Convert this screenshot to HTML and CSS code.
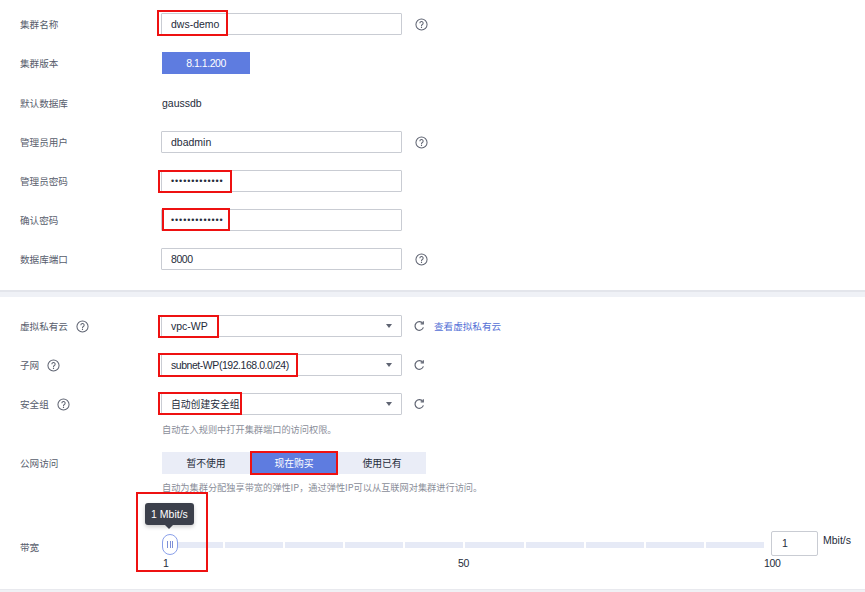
FILE: index.html
```html
<!DOCTYPE html>
<html lang="zh">
<head>
<meta charset="utf-8">
<link rel="stylesheet" href="styles.css">
</head>
<body>
<div class="sec sec1">
  <div class="row">
    <div class="label">集群名称</div>
    <div class="field"><div class="input">dws-demo</div><span class="mark mark-name"></span></div>
    <svg class="help" viewBox="0 0 14 14" width="13" height="13"><circle cx="7" cy="7" r="6" fill="none" stroke="#5f6472" stroke-width="1.1"/><path d="M5.2 5.6a1.8 1.8 0 1 1 2.5 1.6c-.5.2-.7.6-.7 1.1v.5" fill="none" stroke="#5f6472" stroke-width="1.1"/><circle cx="7" cy="10.2" r=".7" fill="#5f6472"/></svg>
  </div>
  <div class="row">
    <div class="label">集群版本</div>
    <div class="version num-text">8.1.1.200</div>
  </div>
  <div class="row row-gap">
    <div class="label">默认数据库</div>
    <div class="plain">gaussdb</div>
  </div>
  <div class="row">
    <div class="label">管理员用户</div>
    <div class="field"><div class="input">dbadmin</div></div>
    <svg class="help" viewBox="0 0 14 14" width="13" height="13"><circle cx="7" cy="7" r="6" fill="none" stroke="#5f6472" stroke-width="1.1"/><path d="M5.2 5.6a1.8 1.8 0 1 1 2.5 1.6c-.5.2-.7.6-.7 1.1v.5" fill="none" stroke="#5f6472" stroke-width="1.1"/><circle cx="7" cy="10.2" r=".7" fill="#5f6472"/></svg>
  </div>
  <div class="row">
    <div class="label">管理员密码</div>
    <div class="field"><div class="input dots">•••••••••••••</div><span class="mark mark-pwd"></span></div>
  </div>
  <div class="row">
    <div class="label">确认密码</div>
    <div class="field"><div class="input dots">•••••••••••••</div><span class="mark mark-confirm"></span></div>
  </div>
  <div class="row">
    <div class="label">数据库端口</div>
    <div class="field"><div class="input num-text">8000</div></div>
    <svg class="help" viewBox="0 0 14 14" width="13" height="13"><circle cx="7" cy="7" r="6" fill="none" stroke="#5f6472" stroke-width="1.1"/><path d="M5.2 5.6a1.8 1.8 0 1 1 2.5 1.6c-.5.2-.7.6-.7 1.1v.5" fill="none" stroke="#5f6472" stroke-width="1.1"/><circle cx="7" cy="10.2" r=".7" fill="#5f6472"/></svg>
  </div>
</div>
<div class="band"></div>
<div class="sec sec2">
  <div class="row">
    <div class="label">虚拟私有云<svg class="help-inline" viewBox="0 0 14 14" width="13" height="13"><circle cx="7" cy="7" r="6" fill="none" stroke="#5f6472" stroke-width="1.1"/><path d="M5.2 5.6a1.8 1.8 0 1 1 2.5 1.6c-.5.2-.7.6-.7 1.1v.5" fill="none" stroke="#5f6472" stroke-width="1.1"/><circle cx="7" cy="10.2" r=".7" fill="#5f6472"/></svg></div>
    <div class="field"><div class="input select">vpc-WP<span class="caret"></span></div><span class="mark mark-vpc"></span></div>
    <svg class="refresh" viewBox="0 0 12 12" width="12" height="12"><path d="M9.8 3.4A4.3 4.3 0 1 0 10.4 7.4" fill="none" stroke="#5f6472" stroke-width="1.2"/><path d="M10.3 1.2v2.6H7.7" fill="none" stroke="#5f6472" stroke-width="1.2"/></svg>
    <a class="link">查看虚拟私有云</a>
  </div>
  <div class="row">
    <div class="label">子网<svg class="help-inline" viewBox="0 0 14 14" width="13" height="13"><circle cx="7" cy="7" r="6" fill="none" stroke="#5f6472" stroke-width="1.1"/><path d="M5.2 5.6a1.8 1.8 0 1 1 2.5 1.6c-.5.2-.7.6-.7 1.1v.5" fill="none" stroke="#5f6472" stroke-width="1.1"/><circle cx="7" cy="10.2" r=".7" fill="#5f6472"/></svg></div>
    <div class="field"><div class="input select num-text">subnet-WP(192.168.0.0/24)<span class="caret"></span></div><span class="mark mark-subnet"></span></div>
    <svg class="refresh" viewBox="0 0 12 12" width="12" height="12"><path d="M9.8 3.4A4.3 4.3 0 1 0 10.4 7.4" fill="none" stroke="#5f6472" stroke-width="1.2"/><path d="M10.3 1.2v2.6H7.7" fill="none" stroke="#5f6472" stroke-width="1.2"/></svg>
  </div>
  <div class="row">
    <div class="label">安全组<svg class="help-inline" viewBox="0 0 14 14" width="13" height="13"><circle cx="7" cy="7" r="6" fill="none" stroke="#5f6472" stroke-width="1.1"/><path d="M5.2 5.6a1.8 1.8 0 1 1 2.5 1.6c-.5.2-.7.6-.7 1.1v.5" fill="none" stroke="#5f6472" stroke-width="1.1"/><circle cx="7" cy="10.2" r=".7" fill="#5f6472"/></svg></div>
    <div class="field"><div class="input select cn">自动创建安全组<span class="caret"></span></div><span class="mark mark-sg"></span></div>
    <svg class="refresh" viewBox="0 0 12 12" width="12" height="12"><path d="M9.8 3.4A4.3 4.3 0 1 0 10.4 7.4" fill="none" stroke="#5f6472" stroke-width="1.2"/><path d="M10.3 1.2v2.6H7.7" fill="none" stroke="#5f6472" stroke-width="1.2"/></svg>
  </div>
  <div class="hint hint1">自动在入规则中打开集群端口的访问权限。</div>
  <div class="row row-public">
    <div class="label">公网访问</div>
    <div class="seg">
      <div class="seg-item">暂不使用</div>
      <div class="seg-item active">现在购买<span class="mark mark-seg"></span></div>
      <div class="seg-item">使用已有</div>
    </div>
  </div>
  <div class="hint hint2">自动为集群分配独享带宽的弹性IP，通过弹性IP可以从互联网对集群进行访问。</div>
  <div class="row-slider">
    <div class="label label-bw">带宽</div>
    <div class="slider">
      <div class="track">
        <span></span><span></span><span></span><span></span><span></span>
        <span></span><span></span><span></span><span></span><span></span>
      </div>
      <div class="handle"><i></i><i></i><i></i></div>
      <div class="tip">1 Mbit/s</div>
      <div class="ticks">
        <span class="tick t1">1</span>
        <span class="tick t50">50</span>
        <span class="tick t100">100</span>
      </div>
      <span class="mark mark-slider"></span>
    </div>
    <div class="num">1</div>
    <div class="unit">Mbit/s</div>
  </div>
</div>
<div class="band-bottom"></div>
</body>
</html>
```
FILE: styles.css
```css
* { box-sizing: border-box; }
body {
  margin: 0;
  background: #fff;
  font-family: "Liberation Sans", "Noto Sans CJK SC", sans-serif;
  color: #252b3a;
  width: 865px;
  height: 592px;
  overflow: hidden;
}
.sec { padding-left: 20px; display: flex; flex-direction: column; }
.sec1 { padding-top: 13px; padding-bottom: 20px; gap: 17px; }
.sec2 { padding-top: 18px; padding-bottom: 19px; }
.sec2 > .row + .row { margin-top: 17px; }
.row { display: flex; align-items: center; height: 22px; }
.label {
  width: 141px;
  flex: none;
  font-family: "Noto Sans CJK SC", sans-serif;
  font-size: 9.6px;
  color: #575d6c;
  display: flex;
  align-items: center;
}
.field { position: relative; width: 241px; height: 22px; flex: none; }
.input {
  width: 100%;
  height: 100%;
  border: 1px solid #c9ccd3;
  border-radius: 1px;
  padding-left: 9px;
  font-size: 10.5px;
  line-height: 20px;
  color: #252b3a;
  position: relative;
}
.num-text { letter-spacing: -0.45px; }
.input.cn { font-family: "Noto Sans CJK SC", sans-serif; font-size: 9.8px; }
.input.dots { font-size: 9px; letter-spacing: 0.9px; line-height: 20px; padding-left: 9px; }
.caret {
  position: absolute;
  right: 9px;
  top: 8px;
  width: 0; height: 0;
  border-left: 3.5px solid transparent;
  border-right: 3.5px solid transparent;
  border-top: 4px solid #5f6472;
}
.help { margin-left: 13px; flex: none; }
.help-inline { margin-left: 8px; flex: none; }
.refresh { margin-left: 11px; flex: none; }
.link {
  margin-left: 9px;
  font-family: "Noto Sans CJK SC", sans-serif;
  font-size: 9.6px;
  color: #5470d6;
}
.version {
  margin-left: 1px;
  width: 88px;
  height: 22px;
  background: #5e7ce0;
  color: #fff;
  font-size: 10.5px;
  line-height: 22px;
  text-align: center;
}
.row-gap { margin-top: 1px; }
.plain { margin-left: 1px; font-size: 10.5px; color: #252b3a; }
.band {
  height: 7px;
  background: #eff1f6;
  border-top: 2px solid #e3e5eb;
}
.hint {
  font-family: "Noto Sans CJK SC", sans-serif;
  font-size: 9.2px;
  color: #8a8e99;
  line-height: 16px;
  padding-left: 142px;
}
.hint1 { margin-top: 6px; }
.row-public { margin-top: 15px; }
.hint2 { margin-top: 5px; }
.seg {
  margin-left: 1px;
  display: flex;
  height: 22px;
  background: #eaedf7;
}
.seg-item {
  width: 88px;
  font-family: "Noto Sans CJK SC", sans-serif;
  font-size: 9.8px;
  line-height: 22px;
  text-align: center;
  color: #252b3a;
  position: relative;
}
.seg-item.active { background: #5e7ce0; color: #fff; }
.row-slider { display: flex; margin-top: 36px; height: 39px; }
.label-bw { height: 25px; padding-top: 7px; }
.slider { position: relative; width: 609px; height: 39px; margin-left: 1px; flex: none; }
.track {
  position: absolute;
  left: 3px;
  top: 11px;
  width: 599px;
  height: 6px;
  display: flex;
  gap: 2px;
}
.track span { flex: 1; background: #e6eaf6; }
.handle {
  position: absolute;
  left: 0;
  top: 3px;
  width: 16px;
  height: 21px;
  border: 1.5px solid #8aa0ea;
  border-radius: 8px;
  background: #fff;
  display: flex;
  justify-content: center;
  align-items: center;
  gap: 1.5px;
}
.handle i { width: 1px; height: 7px; background: #7d8fd6; display: block; }
.tip {
  position: absolute;
  left: -17px;
  top: -28px;
  width: 49px;
  height: 22px;
  background: #3c404b;
  color: #fff;
  border-radius: 3px;
  font-size: 10.5px;
  line-height: 22px;
  text-align: center;
  box-shadow: 0 2px 4px rgba(0,0,0,0.2);
}
.tip::after {
  content: "";
  position: absolute;
  left: 20px;
  bottom: -4px;
  border-left: 4px solid transparent;
  border-right: 4px solid transparent;
  border-top: 4px solid #3c404b;
}
.ticks { position: absolute; left: 0; top: 25px; width: 100%; height: 14px; }
.tick { position: absolute; top: 0; font-size: 10.5px; line-height: 14px; color: #252b3a; letter-spacing: -0.4px; }
.t1 { left: 1px; }
.t50 { left: 296px; }
.t100 { left: 602px; }
.num {
  width: 47px;
  height: 25px;
  border: 1px solid #c9ccd3;
  border-radius: 2px;
  font-size: 10.5px;
  line-height: 23px;
  padding-left: 10px;
  flex: none;
}
.unit { margin-left: 5px; font-size: 10.5px; line-height: 18px; color: #252b3a; }
.band-bottom { height: 10px; background: #f0f1f5; border-top: 1px solid #e8e9ee; }
.mark {
  position: absolute;
  border: 2px solid #ee1111;
  pointer-events: none;
}
.mark-name { left: -4px; top: -3px; width: 71px; height: 26px; }
.mark-pwd { left: -3px; top: 0; width: 74px; height: 23px; }
.mark-confirm { left: 1px; top: -1px; width: 68px; height: 23px; }
.mark-vpc { left: -3px; top: 0; width: 61px; height: 23px; }
.mark-subnet { left: -3px; top: -1px; width: 140px; height: 24px; }
.mark-sg { left: -3px; top: -1px; width: 84px; height: 23px; }
.mark-seg { left: 0; top: -1px; width: 88px; height: 24px; }
.mark-slider { left: -26px; top: -39px; width: 72px; height: 80px; }
```
